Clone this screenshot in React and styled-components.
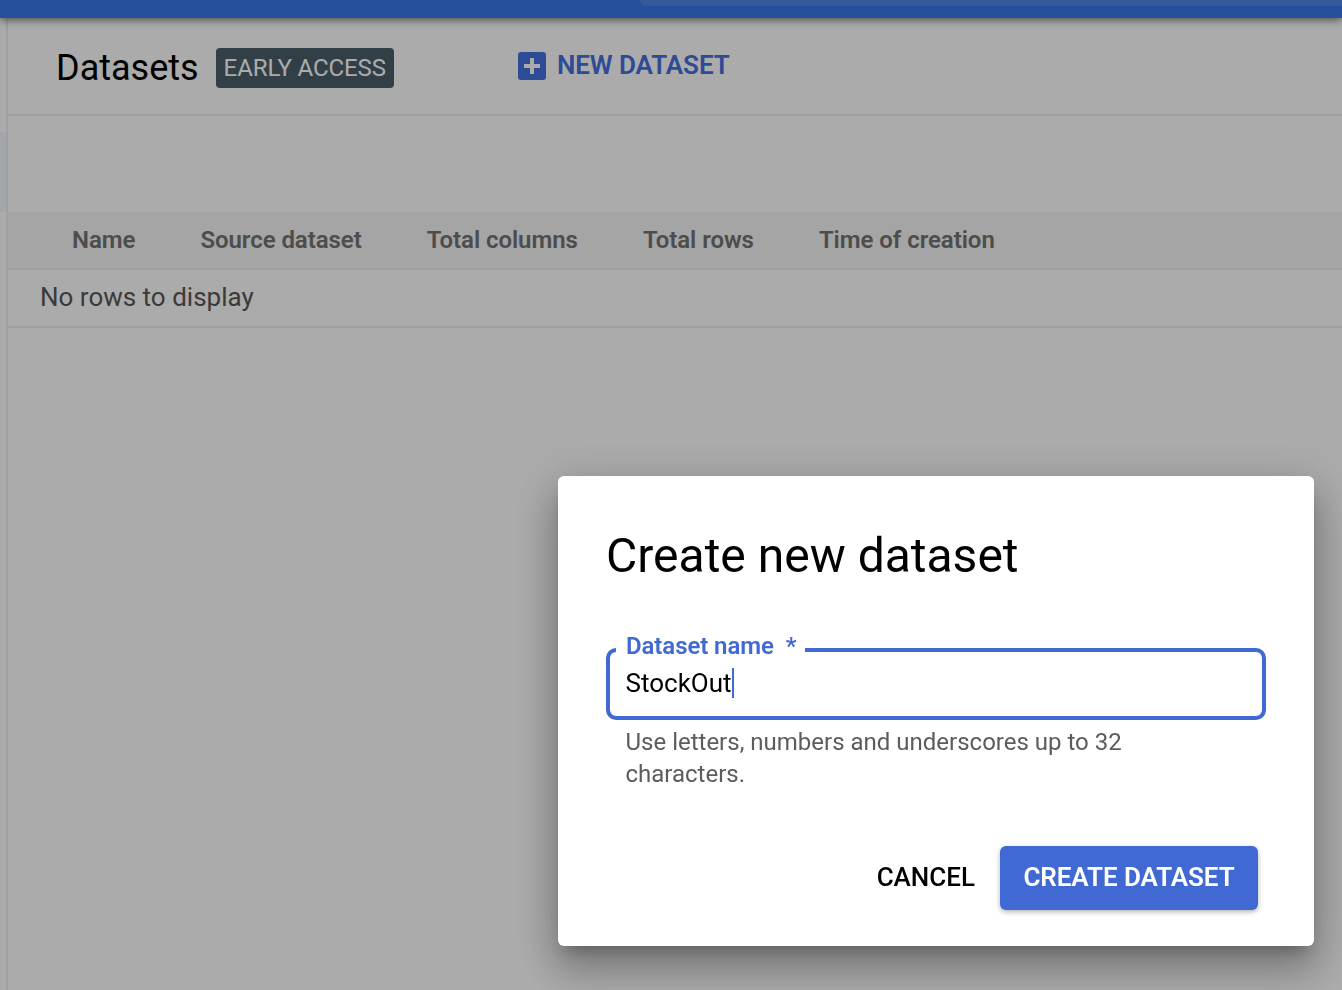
import React from "react";
import styled, { createGlobalStyle } from "styled-components";

const GlobalStyle = createGlobalStyle`
  html, body {
    margin: 0;
    padding: 0;
    height: 100%;
    overflow: hidden;
    background: #fff;
    font-family: Roboto, "Liberation Sans", sans-serif;
  }
  * {
    box-sizing: border-box;
  }
`;

const Page = styled.div`
  display: flex;
  flex-direction: column;
  height: 990px;
  background: #fff;
`;

const TopBar = styled.header`
  flex: none;
  height: 18px;
  padding-left: 640px;
  background: #3677e6;
  box-shadow: 0 2px 8px rgba(0, 0, 0, 0.55);
  position: relative;
  z-index: 1;
`;

const SearchBox = styled.div`
  height: 6px;
  background: #5186e4;
  border-radius: 0 0 0 6px;
`;

const Body = styled.div`
  flex: 1;
  display: flex;
`;

const Rail = styled.nav`
  flex: none;
  width: 6px;
  padding-top: 114px;
`;

const RailItem = styled.div`
  height: 80px;
  background: #f3f8ff;
`;

const Main = styled.main`
  flex: 1;
  border-left: 2px solid #ededed;
`;

const Header = styled.div`
  display: flex;
  align-items: center;
  height: 98px;
  padding: 4px 0 0 48px;
  border-bottom: 2px solid #ededed;
`;

const Title = styled.h1`
  margin: 0 17px 0 0;
  font-size: 36px;
  font-weight: 400;
  color: #000;
`;

const Badge = styled.span`
  display: flex;
  align-items: center;
  height: 40px;
  padding: 0 8px;
  border-radius: 4px;
  background: #4c5f6b;
  color: #fff;
  font-size: 24px;
  letter-spacing: -0.1px;
`;

const NewButton = styled.button`
  display: flex;
  align-items: center;
  gap: 11px;
  margin: 0 0 5px 124px;
  padding: 0;
  border: none;
  background: none;
  color: #4570e0;
  font: 600 26px Roboto, sans-serif;
  letter-spacing: -0.08px;
`;

const NewLabel = styled.span`
  padding-bottom: 2px;
`;

const PlusBox = styled.svg`
  display: block;
  width: 28px;
  height: 28px;
`;

const Spacer = styled.div`
  height: 96px;
`;

const HeadRow = styled.div`
  display: flex;
  align-items: center;
  gap: 65px;
  height: 58px;
  padding-left: 64px;
  background: #f6f6f6;
  border-bottom: 2px solid #ededed;
`;

const HeadCell = styled.span`
  font-size: 24px;
  font-weight: 600;
  letter-spacing: -0.06px;
  color: #737373;
`;

const EmptyRow = styled.div`
  display: flex;
  align-items: center;
  height: 58px;
  padding: 0 0 2px 32px;
  border-bottom: 2px solid #ededed;
  font-size: 26px;
  color: #585858;
`;

const Scrim = styled.div`
  position: fixed;
  inset: 0;
  z-index: 2;
  background: rgba(0, 0, 0, 0.33);
`;

const Modal = styled.section`
  position: fixed;
  left: 558px;
  top: 476px;
  z-index: 3;
  width: 756px;
  height: 470px;
  padding: 50px 48px 0;
  border-radius: 6px;
  background: #fff;
  box-shadow: 0 11px 15px -7px rgba(0, 0, 0, 0.25), 0 24px 38px 3px rgba(0, 0, 0, 0.2),
    0 9px 46px 8px rgba(0, 0, 0, 0.14);
`;

const ModalTitle = styled.h2`
  margin: 0;
  font-size: 48px;
  line-height: 60px;
  font-weight: 400;
  color: #000;
`;

const Field = styled.fieldset`
  height: 88px;
  margin: 46px 0 0;
  padding: 0 16px;
  border: 4px solid #4169d3;
  border-radius: 10px;
`;

const Legend = styled.legend`
  margin-left: -10px;
  padding: 0 8px 8px 10px;
  font-size: 24px;
  font-weight: 600;
  line-height: 28px;
  letter-spacing: -0.08px;
  color: #4169d3;
`;

const Star = styled.span`
  margin-left: 12px;
`;

const InputText = styled.div`
  display: inline-block;
  height: 30px;
  margin-left: -0.5px;
  border-right: 2px solid #4169d3;
  font-size: 26px;
  line-height: 30px;
  color: #000;
`;

const Help = styled.p`
  width: 520px;
  margin: 6px 0 0 19.5px;
  font-size: 24px;
  line-height: 32px;
  color: #5c5c5c;
`;

const Actions = styled.div`
  display: flex;
  justify-content: flex-end;
  align-items: center;
  gap: 25px;
  margin: 56px 8px 0 0;
`;

const CancelButton = styled.button`
  padding: 0 0 2px;
  border: none;
  background: none;
  color: #000;
  font: 500 26px Roboto, sans-serif;
`;

const CreateButton = styled.button`
  width: 258px;
  height: 64px;
  padding: 0 0 2px;
  border: none;
  border-radius: 6px;
  background: #4169d3;
  color: #fff;
  font: 600 26px Roboto, sans-serif;
  letter-spacing: -0.08px;
  box-shadow: 0 2px 5px rgba(0, 0, 0, 0.3);
`;

const columns = ["Name", "Source dataset", "Total columns", "Total rows", "Time of creation"];

export default function App() {
  return (
    <>
      <GlobalStyle />
      <Page>
        <TopBar>
          <SearchBox />
        </TopBar>
        <Body>
          <Rail>
            <RailItem />
          </Rail>
          <Main>
            <Header>
              <Title>Datasets</Title>
              <Badge>EARLY ACCESS</Badge>
              <NewButton>
                <PlusBox viewBox="0 0 28 28">
                  <rect width="28" height="28" rx="3" fill="#4570e0" />
                  <path d="M12 6h4v6h6v4h-6v6h-4v-6H6v-4h6z" fill="#fff" />
                </PlusBox>
                <NewLabel>NEW DATASET</NewLabel>
              </NewButton>
            </Header>
            <Spacer />
            <HeadRow>
              {columns.map((c) => (
                <HeadCell key={c}>{c}</HeadCell>
              ))}
            </HeadRow>
            <EmptyRow>No rows to display</EmptyRow>
          </Main>
        </Body>
      </Page>
      <Scrim />
      <Modal>
        <ModalTitle>Create new dataset</ModalTitle>
        <Field>
          <Legend>
            Dataset name<Star>*</Star>
          </Legend>
          <InputText>StockOut</InputText>
        </Field>
        <Help>Use letters, numbers and underscores up to 32 characters.</Help>
        <Actions>
          <CancelButton>CANCEL</CancelButton>
          <CreateButton>CREATE DATASET</CreateButton>
        </Actions>
      </Modal>
    </>
  );
}
